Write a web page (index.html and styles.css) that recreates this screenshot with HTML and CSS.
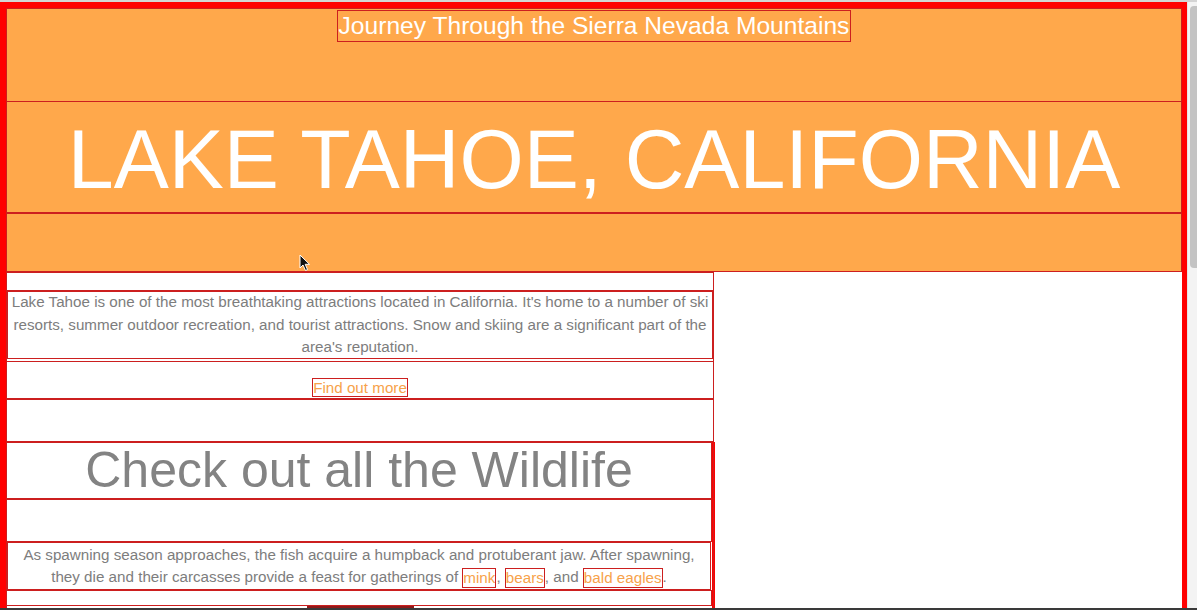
FILE: index.html
```html
<!DOCTYPE html>
<html lang="en">
<head>
<meta charset="utf-8">
<title>Lake Tahoe, California</title>
<link rel="stylesheet" href="styles.css">
</head>
<body>
<div class="chrome-top"></div>
<div class="frame">
  <div class="page">
    <header class="hero dbg">
      <div class="hero-top">
        <h3 class="tagline dbg">Journey Through the Sierra Nevada Mountains</h3>
      </div>
      <div class="hero-mid dbg">
        <h1 class="hero-title">LAKE TAHOE, CALIFORNIA</h1>
      </div>
      <div class="hero-bottom dbg"></div>
    </header>
    <div class="content">
      <div class="col dbg">
        <section class="intro">
          <div class="spacer s19 dbg"></div>
          <p class="text dbg">Lake Tahoe is one of the most breathtaking attractions located in California. It's home to a number of ski resorts, summer outdoor recreation, and tourist attractions. Snow and skiing are a significant part of the area's reputation.</p>
          <div class="more dbg"><a class="link dbg" href="#">Find out more</a></div>
        </section>
        <section class="wildlife">
          <div class="spacer s43 dbg"></div>
          <div class="wild-body">
            <h2 class="sub dbg">Check out all the Wildlife</h2>
            <div class="spacer s43 dbg"></div>
            <p class="text text2 dbg">As spawning season approaches, the fish acquire a humpback and protuberant jaw. After spawning, they die and their carcasses provide a feast for gatherings of <a class="link dbg" href="#">mink</a>, <a class="link dbg" href="#">bears</a>, and <a class="link dbg" href="#">bald eagles</a>.</p>
            <div class="spacer s16 dbg"></div>
            <div class="next-row"><div class="next-btn"></div></div>
          </div>
        </section>
      </div>
      <div class="aside"></div>
    </div>
  </div>
  <div class="scrollbar"><div class="thumb"></div></div>
</div>
<div class="chrome-bottom"></div>
<svg class="cursor" width="12" height="18" viewBox="0 0 12 18"><path d="M1 1 L1 14 L4 11 L6.5 16.5 L8.5 15.6 L6.2 10.3 L10.5 10.3 Z" fill="#111" stroke="#fff" stroke-width="1"/></svg>
</body>
</html>
```

FILE: styles.css
```css
html, body {
  margin: 0;
  padding: 0;
  height: 610px;
  overflow: hidden;
  background: #fff;
  font-family: "Liberation Sans", Arial, Helvetica, sans-serif;
}

.chrome-top {
  height: 2px;
  background: #d4d4d4;
}

.frame {
  display: flex;
  height: 608px;
}

.page {
  width: 1176px;
  border-left: 6px solid #f00;
  border-top: 6px solid #f00;
  border-right: 5px solid #f00;
  display: flex;
  flex-direction: column;
}

.dbg {
  outline: 1px solid #cc1f1f;
  outline-offset: -1px;
}

.hero {
  background: #ffa84b;
  height: 264px;
  display: flex;
  flex-direction: column;
}

.hero-top {
  height: 93px;
  text-align: center;
  padding-top: 2px;
  box-sizing: border-box;
}

.tagline {
  display: inline-block;
  margin: 0;
  color: #fff;
  font-weight: normal;
  font-size: 24.6px;
  line-height: 32px;
  padding: 0 2px;
}

.hero-mid {
  height: 112px;
  box-sizing: border-box;
  padding-top: 5px;
}

.hero-title {
  margin: 0;
  color: #fff;
  font-weight: normal;
  font-size: 82.6px;
  line-height: 107px;
  text-align: center;
}

.hero-bottom {
  height: 59px;
}

.content {
  display: flex;
  flex: 1;
}

.col {
  width: 708px;
  display: flex;
  flex-direction: column;
}

.aside {
  flex: 1;
}

.spacer.s19 { height: 19px; }
.spacer.s43 { height: 43px; }
.spacer.s16 { height: 16px; }

.text {
  margin: 0 1px;
  color: #7d7d7d;
  font-size: 15.2px;
  line-height: 22.6px;
  text-align: center;
  padding: 0 2px;
}

.text2 {
  line-height: 22px;
  padding: 2px 2px;
}

.intro .text {
  height: 68px;
  box-sizing: border-box;
}

.more {
  margin-top: 2px;
  height: 38px;
  display: flex;
  justify-content: center;
  align-items: flex-end;
  padding-bottom: 2px;
  box-sizing: border-box;
}

.link {
  color: #f7a24a;
  text-decoration: none;
  padding: 0 1px;
}

.more .link {
  font-size: 15.2px;
  line-height: 19px;
  display: inline-block;
}

.text2 .link {
  display: inline-block;
  line-height: 20px;
  padding: 0 1px;
  vertical-align: bottom;
}

.wildlife {
  display: flex;
  flex-direction: column;
  flex: 1;
}

.wild-body {
  display: flex;
  flex-direction: column;
  flex: 1;
  border-right: 3px solid #f00;
  margin-right: -1px;
}

.sub {
  margin: 0;
  color: #838383;
  font-weight: normal;
  font-size: 50px;
  line-height: 57px;
  text-align: center;
}

.next-row {
  display: flex;
  justify-content: center;
  padding-left: 3px;
}

.next-btn {
  width: 107px;
  height: 6px;
  background: #8f1a1a;
}

.scrollbar {
  width: 10px;
  background: #f3f3f3;
  border-left: 1px solid #e4e4e4;
  padding-top: 4px;
  box-sizing: border-box;
  display: flex;
  justify-content: flex-end;
}

.thumb {
  width: 7px;
  height: 262px;
  background: #c3c3c3;
  border-radius: 4px 0 0 4px;
}

.chrome-bottom {
  position: absolute;
  left: 0;
  right: 0;
  top: 608px;
  height: 2px;
  background: #3a3a3a;
}

.cursor {
  position: absolute;
  left: 299px;
  top: 254px;
}
```
